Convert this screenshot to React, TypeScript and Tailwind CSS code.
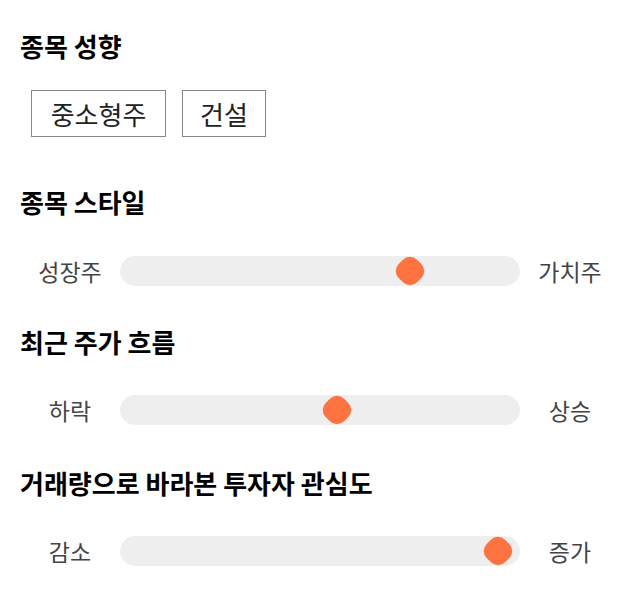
import React from "react";

const font = { fontFamily: '"Noto Sans CJK KR", "Noto Sans", sans-serif' };

function Thumb({ center }: { center: number }) {
  return (
    <div
      className="absolute top-1/2 w-[30px] h-[30px] -translate-y-1/2 -translate-x-1/2 flex items-center justify-center"
      style={{ left: `${center}px` }}
    >
      <div className="w-[26px] h-[26px] rotate-45 rounded-[10px] bg-[#ff7340]" />
    </div>
  );
}

function SliderRow({
  left,
  right,
  thumb,
  className,
}: {
  left: string;
  right: string;
  thumb: number;
  className: string;
}) {
  return (
    <div className={`flex items-center px-5 h-[30px] ${className}`}>
      <div className="w-[100px] text-center text-[23px] text-[#444444] leading-[30px]">{left}</div>
      <div className="relative flex-1 h-[30px] rounded-full bg-[#eeeeee]">
        <Thumb center={thumb} />
      </div>
      <div className="w-[100px] text-center text-[23px] text-[#444444] leading-[30px]">{right}</div>
    </div>
  );
}

export default function App() {
  return (
    <div className="w-[640px] h-[606px] bg-white pt-[31px]" style={font}>
      <div className="pl-[20px] text-[26px] font-bold leading-[30px] text-black">종목 성향</div>
      <div className="flex gap-4 ml-[31px] mt-[29px]">
        <div className="w-[135px] h-[47px] flex items-center justify-center border border-[#888888] text-[26px] text-[#222222]">
          중소형주
        </div>
        <div className="w-[84px] h-[47px] flex items-center justify-center border border-[#888888] text-[26px] text-[#222222]">
          건설
        </div>
      </div>
      <div className="pl-[20px] mt-[50px] text-[26px] font-bold leading-[30px] text-black">종목 스타일</div>
      <SliderRow left="성장주" right="가치주" thumb={290} className="mt-[39px]" />
      <div className="pl-[20px] mt-[41px] text-[26px] font-bold leading-[30px] text-black">최근 주가 흐름</div>
      <SliderRow left="하락" right="상승" thumb={217} className="mt-[38px]" />
      <div className="pl-[20px] mt-[43px] text-[26px] font-bold leading-[30px] text-black">
        거래량으로 바라본 투자자 관심도
      </div>
      <SliderRow left="감소" right="증가" thumb={378} className="mt-[38px]" />
    </div>
  );
}
